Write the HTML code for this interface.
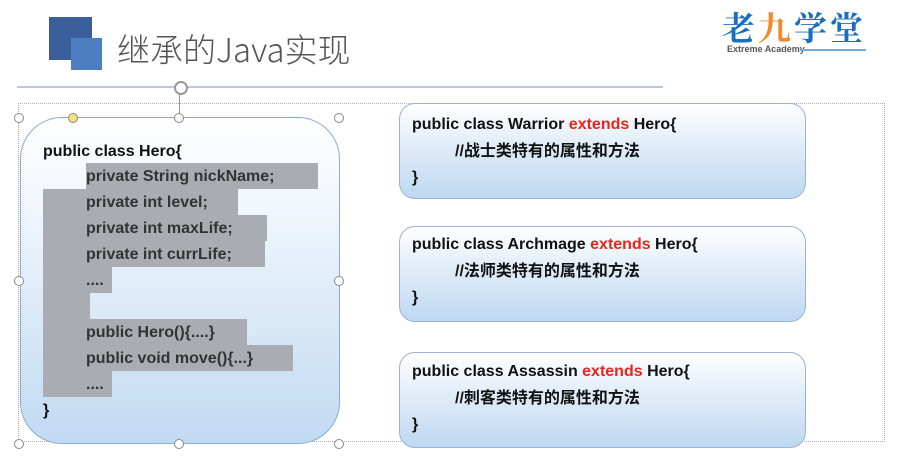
<!DOCTYPE html>
<html><head><meta charset="utf-8"><style>
body{margin:0;width:903px;height:460px;background:#fff;position:relative;overflow:hidden;font-family:"Liberation Sans","Noto Sans CJK SC",sans-serif}
.a{position:absolute}
.hl{position:absolute;background:#a9acb2;height:26px}
.ln{position:absolute;left:86px;font-weight:bold;font-size:16px;line-height:26px;color:#333;white-space:nowrap}
.rb{position:absolute;left:399px;width:405px;height:94px;border:1px solid #9ab3d6;border-radius:16px;background:linear-gradient(#fff 0%,#e4eef9 40%,#bed8f1 100%)}
.rb div{position:absolute;left:12px;font-weight:bold;font-size:16px;line-height:20px;color:#111;white-space:nowrap}
.red{color:#e8251c}
.h{position:absolute;width:8px;height:8px;border:1px solid #888;border-radius:50%;background:#fff}
</style></head><body>
<div class="a" style="left:49px;top:17px;width:43px;height:43px;background:#3a5f9a"></div>
<div class="a" style="left:71px;top:38px;width:31px;height:32px;background:#4e7ec2"></div>
<div class="a" style="left:117px;top:24px;font-size:33px;color:#555;font-family:'Noto Sans CJK SC',sans-serif;font-weight:300">继承的Java实现</div>
<div class="a" style="left:722px;top:9px;font-size:33px;line-height:36px;font-weight:bold;color:#1b6fc0;font-family:'Noto Serif CJK SC',serif;letter-spacing:3px">老<span style="color:#f08a2a">九</span>学堂</div>
<div class="a" style="left:727px;top:44px;font-size:9px;color:#555;font-weight:bold;background:#fff;padding-right:3px">Extreme Academy</div>
<div class="a" style="left:800px;top:49px;width:66px;height:2px;background:#7aaad8"></div>
<div class="a" style="left:17px;top:86px;width:646px;height:2px;background:#b8c8de"></div>
<div class="a" style="left:174px;top:81px;width:10px;height:10px;border:2px solid #999;border-radius:50%;background:#fff"></div>
<div class="a" style="left:179px;top:93px;width:1px;height:24px;background:#999"></div>
<div class="a" style="left:18px;top:103px;width:865px;height:337px;border:1px dotted #aaa"></div>
<div class="a" style="left:20px;top:117px;width:318px;height:325px;border:1px solid #8ea9d2;border-radius:42px;background:linear-gradient(#fff 0%,#f2f7fc 25%,#c0daf2 100%)"></div>
<div class="hl" style="left:86px;top:163px;width:232px"></div>
<div class="hl" style="left:43px;top:189px;width:195px"></div>
<div class="hl" style="left:43px;top:215px;width:224px"></div>
<div class="hl" style="left:43px;top:241px;width:222px"></div>
<div class="hl" style="left:43px;top:267px;width:69px"></div>
<div class="hl" style="left:43px;top:293px;width:47px"></div>
<div class="hl" style="left:43px;top:319px;width:204px"></div>
<div class="hl" style="left:43px;top:345px;width:250px"></div>
<div class="hl" style="left:43px;top:371px;width:69px"></div>
<div class="ln" style="left:43px;top:139px;color:#111">public class Hero{</div>
<div class="ln" style="top:164px">private String nickName;</div>
<div class="ln" style="top:190px">private int level;</div>
<div class="ln" style="top:216px">private int maxLife;</div>
<div class="ln" style="top:242px">private int currLife;</div>
<div class="ln" style="top:268px">....</div>
<div class="ln" style="top:320px">public Hero(){....}</div>
<div class="ln" style="top:346px">public void move(){...}</div>
<div class="ln" style="top:372px">....</div>
<div class="ln" style="left:43px;top:398px;color:#111">}</div>
<div class="h" style="left:14px;top:113px"></div><div class="h" style="left:174px;top:113px"></div><div class="h" style="left:334px;top:113px"></div>
<div class="h" style="left:68px;top:113px;background:#f5e27a"></div>
<div class="h" style="left:14px;top:276px"></div><div class="h" style="left:334px;top:276px"></div>
<div class="h" style="left:14px;top:439px"></div><div class="h" style="left:174px;top:439px"></div><div class="h" style="left:334px;top:439px"></div>
<div class="rb" style="top:103px"><div style="top:11px">public class Warrior <span class="red">extends</span> Hero{</div><div style="left:55px;top:38px">//战士类特有的属性和方法</div><div style="top:64px">}</div></div>
<div class="rb" style="top:226px"><div style="top:8px">public class Archmage <span class="red">extends</span> Hero{</div><div style="left:55px;top:35px">//法师类特有的属性和方法</div><div style="top:61px">}</div></div>
<div class="rb" style="top:352px"><div style="top:9px">public class Assassin <span class="red">extends</span> Hero{</div><div style="left:55px;top:36px">//刺客类特有的属性和方法</div><div style="top:62px">}</div></div>
</body></html>
